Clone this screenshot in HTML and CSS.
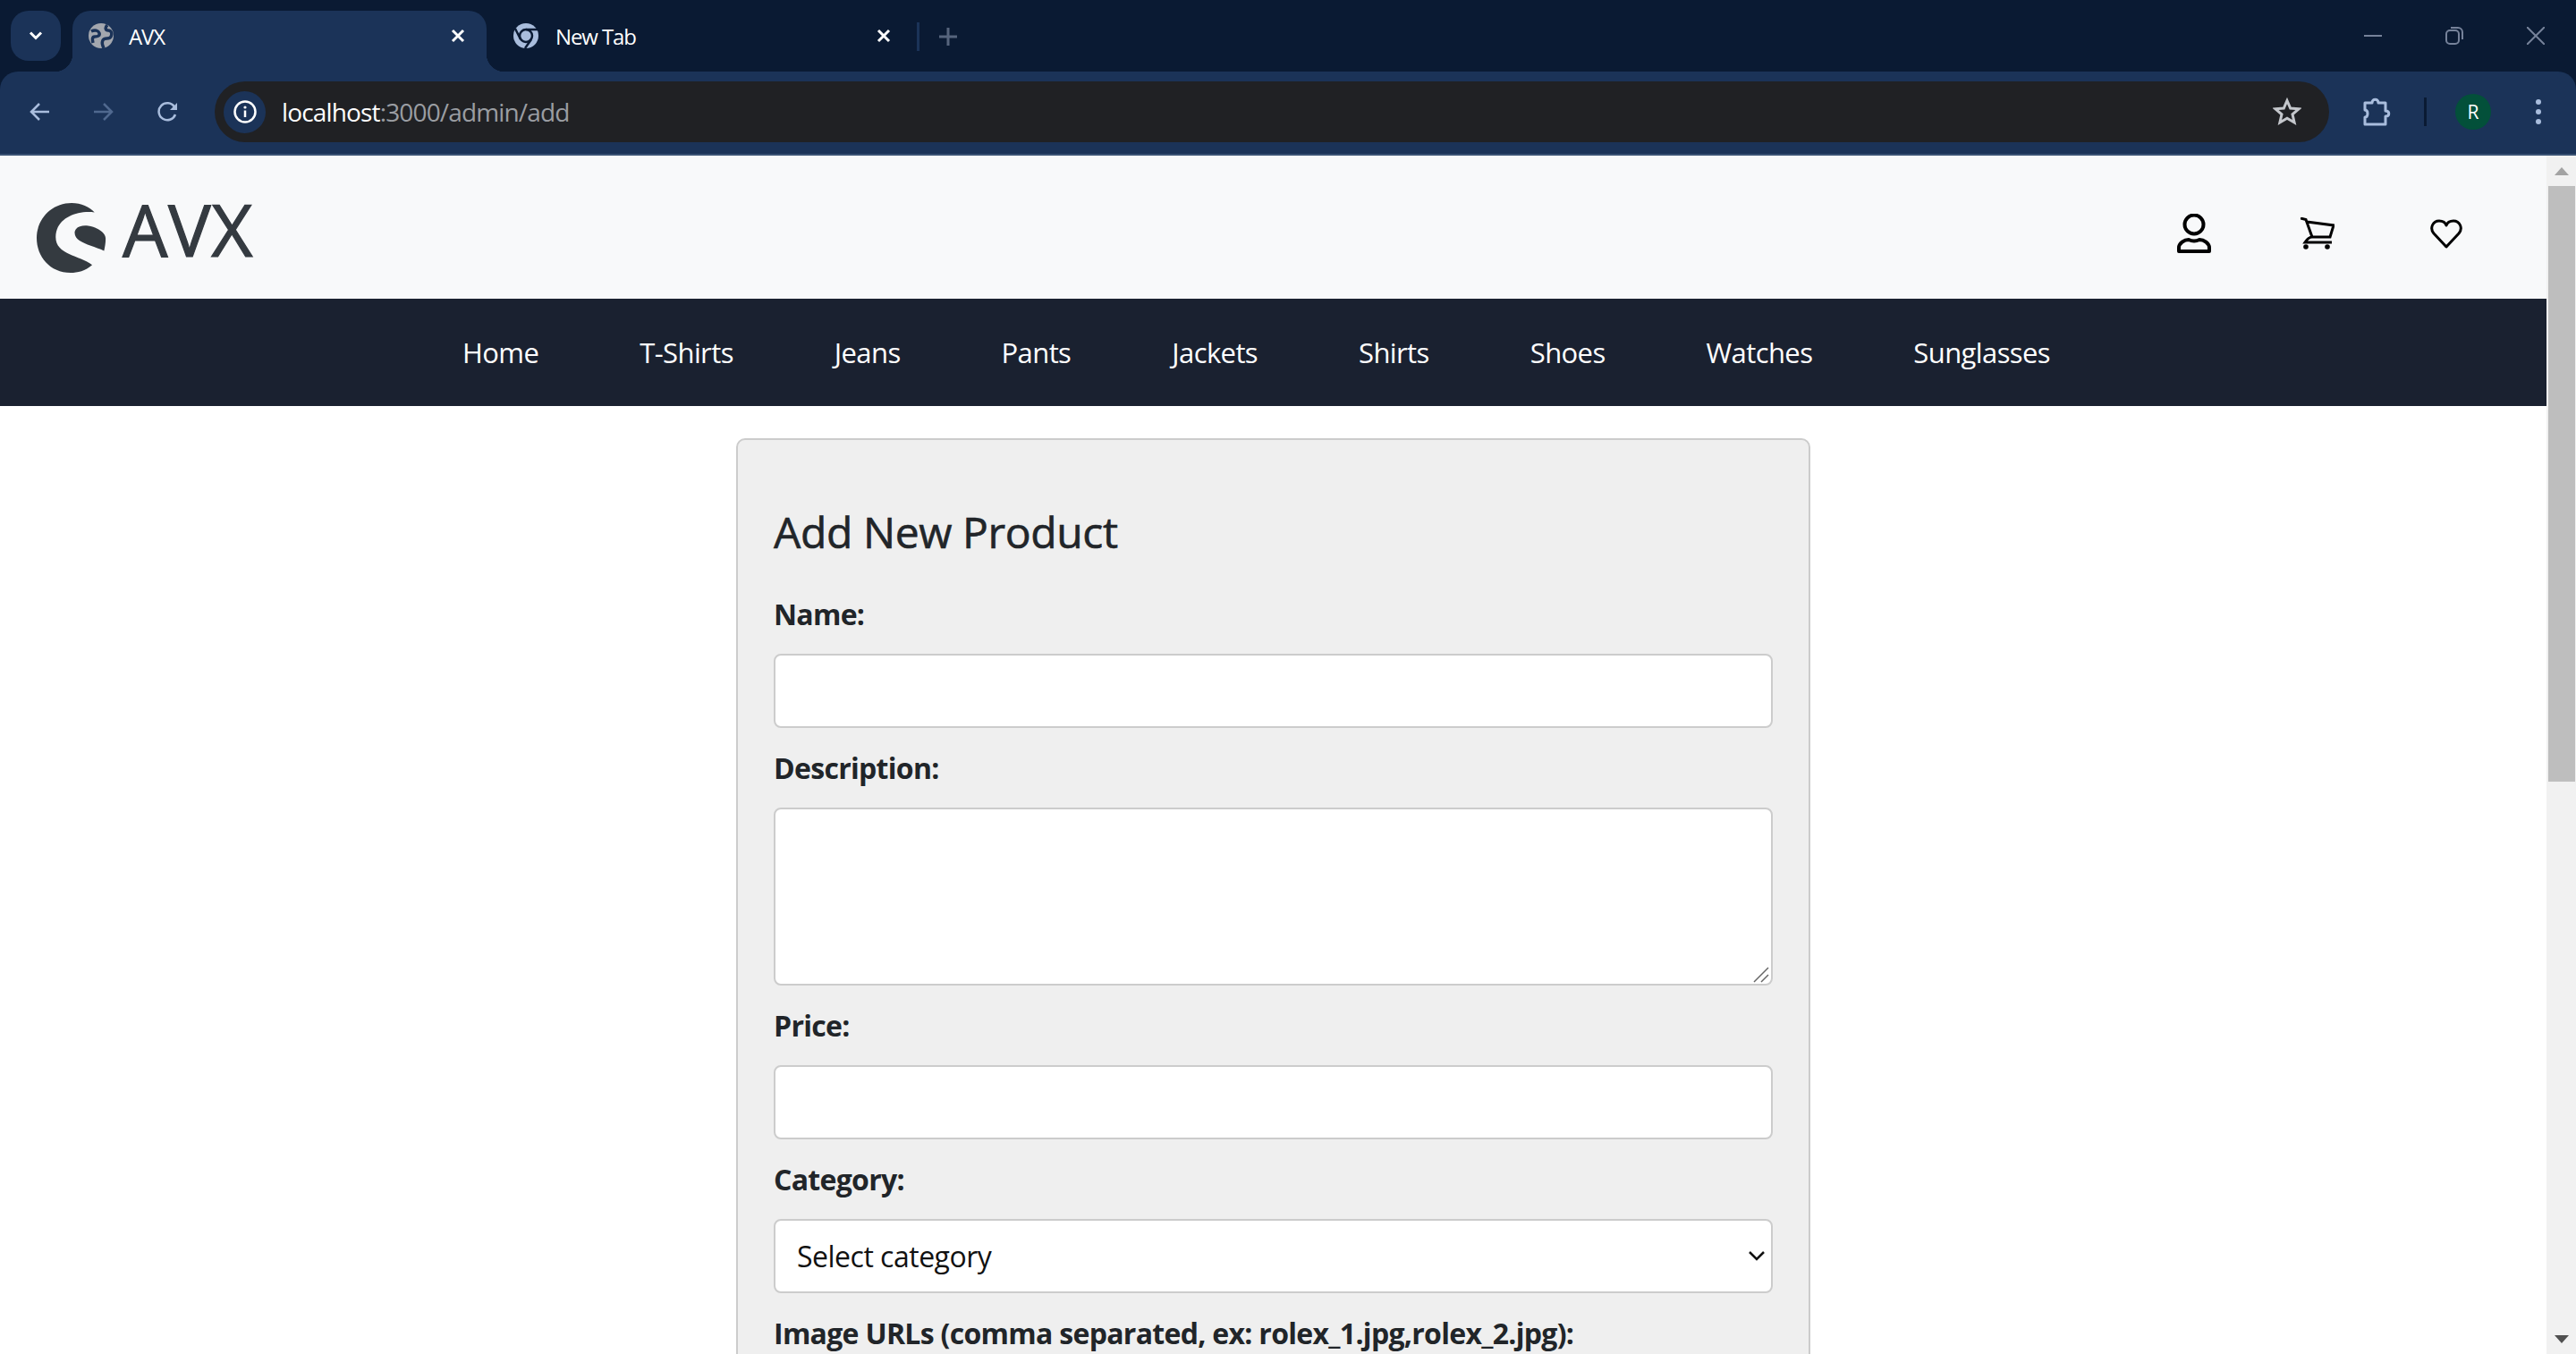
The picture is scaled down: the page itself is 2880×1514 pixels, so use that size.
FILE: index.html
```html
<!doctype html>
<html lang="en">
<head>
    <title>AVX</title>
    <link rel="stylesheet" href="styles.css">
</head>
<body>
    <div class="tabstrip">
        <div class="tab-search">
            <svg width="16" height="12" viewBox="0 0 16 12"><path d="M2 2.500l6 6 6-6" fill="none" stroke="#fff" stroke-width="3"/></svg>
        </div>
        <div class="tab tab-active">
            <svg class="favicon" width="28" height="28" viewBox="0 0 28 28">
                <circle cx="14" cy="14" r="14" fill="#a3a7ae"/>
                <path d="M3 9c4-2 8-1 9 2s-2 4-5 4-3 3-2 7M21 2c-3 3-2 6 1 6s5 3 3 7-7 0-9 4 0 6 1 9" fill="none" stroke="#1b3358" stroke-width="3.500"/>
            </svg>
            <span class="tab-title">AVX</span>
            <svg class="tab-close" width="16" height="16" viewBox="0 0 16 16"><path d="M2 2l12 12M14 2L2 14" stroke="#fff" stroke-width="3"/></svg>
        </div>
        <div class="tab">
            <svg class="favicon" width="28" height="28" viewBox="0 0 28 28">
                <circle cx="14" cy="14" r="14" fill="#a9bddd"/>
                <circle cx="14" cy="14" r="7" fill="none" stroke="#0a1a33" stroke-width="2.500"/>
                <path d="M14 7h13M8 18L2 6M20 18l-7 10" stroke="#0a1a33" stroke-width="2.500"/>
            </svg>
            <span class="tab-title">New Tab</span>
            <svg class="tab-close" width="16" height="16" viewBox="0 0 16 16"><path d="M2 2l12 12M14 2L2 14" stroke="#fff" stroke-width="3"/></svg>
        </div>
        <div class="tab-sep"></div>
        <svg class="tab-new" width="20" height="20" viewBox="0 0 20 20"><path d="M10 0v20M0 10h20" stroke="#56647d" stroke-width="3"/></svg>
        <div class="window-btns">
            <svg width="20" height="20" viewBox="0 0 20 20"><path d="M0 10h20" stroke="#76829a" stroke-width="2"/></svg>
            <svg width="20" height="20" viewBox="0 0 20 20"><rect x="1" y="4" width="14" height="15" rx="4" fill="none" stroke="#76829a" stroke-width="2"/><path d="M6 1h8a5 5 0 0 1 5 5v8" fill="none" stroke="#76829a" stroke-width="2"/></svg>
            <svg width="20" height="20" viewBox="0 0 20 20"><path d="M0 0l20 20M20 0L0 20" stroke="#76829a" stroke-width="2"/></svg>
        </div>
    </div>

    <div class="toolbar">
        <svg class="nav-btn" width="24" height="24" viewBox="0 0 24 24"><path d="M23 12H3M12 3l-9 9 9 9" fill="none" stroke="#a9bddd" stroke-width="2.500"/></svg>
        <svg class="nav-btn" width="24" height="24" viewBox="0 0 24 24"><path d="M1 12h20M12 3l9 9-9 9" fill="none" stroke="#50698f" stroke-width="2.500"/></svg>
        <svg class="nav-btn" width="24" height="24" viewBox="0 0 24 24"><path d="M20 15a9.500 9.500 0 1 1-1-8.500" fill="none" stroke="#a9bddd" stroke-width="2.500"/><path d="M22 2v8h-8z" fill="#a9bddd"/></svg>
        <div class="omnibox">
            <div class="site-info">
                <svg width="26" height="26" viewBox="0 0 26 26"><circle cx="13" cy="13" r="11.500" fill="none" stroke="#fff" stroke-width="2.500"/><path d="M13 11.500v7.500" stroke="#fff" stroke-width="2.500"/><circle cx="13" cy="8" r="1.600" fill="#fff"/></svg>
            </div>
            <span class="url"><span class="url-host">localhost</span>:3000/admin/add</span>
            <svg class="star" width="32" height="32" viewBox="0 0 32 32"><path d="M16 3.500l3.700 8.500 9.300.8-7 6.100 2.100 9.100-8.100-4.800-8.100 4.800 2.100-9.100-7-6.100 9.300-.8z" fill="none" stroke="#c4c7cc" stroke-width="3"/></svg>
        </div>
        <svg class="puzzle" width="32" height="32" viewBox="0 0 32 32"><path d="M2 6h8c0-5 7-5 7 0h8v9c5 0 5 6 0 6v9H2v-8c4 0 4-8 0-8z" fill="none" stroke="#a9bddd" stroke-width="3" stroke-linejoin="round"/></svg>
        <div class="toolbar-sep"></div>
        <div class="avatar">R</div>
        <svg class="dots" width="8" height="30" viewBox="0 0 8 30"><circle cx="4" cy="4" r="3" fill="#a9bddd"/><circle cx="4" cy="15" r="3" fill="#a9bddd"/><circle cx="4" cy="26" r="3" fill="#a9bddd"/></svg>
    </div>

    <div class="viewport">
        <div class="page">
            <header class="site-header">
                <div class="logo">
                    <svg width="78" height="78" viewBox="92 172 176 232" preserveAspectRatio="none">
                        <path d="M238 203C190 195 140 225 140 285C140 345 200 345 232 378C215 398 195 404 178 404C125 404 92 350 92 288C92 225 130 172 180 172C205 172 225 185 238 203Z" fill="#343a40"/>
                        <path d="M188 268C190 252 205 245 222 248C245 253 266 270 266 290C266 305 264 318 262 331C240 318 215 310 200 297C192 290 187 280 188 268Z" fill="#343a40"/>
                    </svg>
                    <span class="logo-text">AVX</span>
                </div>
                <div class="header-icons">
                    <svg width="38" height="44" viewBox="0 0 38 44"><circle cx="19" cy="12" r="10.500" fill="none" stroke="#000" stroke-width="4"/><path d="M2 42v-4c0-5 6-9 11-9q6 3 12 0c5 0 11 4 11 9v4z" fill="none" stroke="#000" stroke-width="4" stroke-linejoin="round"/></svg>
                    <svg width="38" height="36" viewBox="0 0 38 36"><path d="M0 1l6 1.500 7 19.500c-3 0-6 3-8 6h30M7 5l30 4-4 13H13" fill="none" stroke="#000" stroke-width="3"/><circle cx="6" cy="33" r="2.800"/><circle cx="30" cy="33" r="2.800"/></svg>
                    <svg width="36" height="33" viewBox="0 0 36 33"><path d="M18 31L4 16C-1 10 3 2 10 2c4 0 7 2 8 5 1-3 4-5 8-5 7 0 11 8 6 14z" fill="none" stroke="#000" stroke-width="3" stroke-linejoin="round"/></svg>
                </div>
            </header>

            <nav class="main-nav">
                <a href="#">Home</a>
                <a href="#">T-Shirts</a>
                <a href="#">Jeans</a>
                <a href="#">Pants</a>
                <a href="#">Jackets</a>
                <a href="#">Shirts</a>
                <a href="#">Shoes</a>
                <a href="#">Watches</a>
                <a href="#">Sunglasses</a>
            </nav>

            <form class="product-form">
                <h2>Add New Product</h2>
                <label for="name">Name:</label>
                <input id="name" type="text">
                <label for="description">Description:</label>
                <div class="field-wrap">
                    <textarea id="description"></textarea>
                    <svg class="grip" width="18" height="18" viewBox="0 0 18 18"><path d="M1 17L17 1M9 17l8-8" stroke="#666" stroke-width="1.500"/></svg>
                </div>
                <label for="price">Price:</label>
                <input id="price" type="text">
                <label for="category">Category:</label>
                <div class="field-wrap">
                    <select id="category">
                        <option>Select category</option>
                    </select>
                    <svg class="chevron" width="18" height="12" viewBox="0 0 18 12"><path d="M1 2l8 8 8-8" fill="none" stroke="#111" stroke-width="2.500"/></svg>
                </div>
                <label for="images">Image URLs (comma separated, ex: rolex_1.jpg,rolex_2.jpg):</label>
                <input id="images" type="text">
            </form>
        </div>
        <div class="scrollbar">
            <div class="scroll-btn"><div class="arrow-up"></div></div>
            <div class="scroll-thumb"></div>
            <div class="scroll-btn scroll-btn-down"><div class="arrow-down"></div></div>
        </div>
    </div>
</body>
</html>
```

FILE: styles.css
```css
* {
    box-sizing: border-box;
}
html, body {
    margin: 0;
    height: 1514px;
    overflow: hidden;
}
body {
    display: flex;
    flex-direction: column;
    font-family: "Open Sans", "Noto Sans", sans-serif;
    color: #212529;
    background: #0a1a33;
}

/* browser tabs */
.tabstrip {
    height: 80px;
    flex: none;
    display: flex;
    align-items: flex-start;
    padding: 12px 0 0 12px;
    color: #fff;
}
.tab-search {
    width: 56px;
    height: 56px;
    margin-right: 13px;
    border-radius: 20px;
    background: #1b3358;
    display: flex;
    align-items: center;
    justify-content: center;
}
.tab {
    position: relative;
    width: 463px;
    height: 68px;
    display: flex;
    align-items: center;
    padding: 0 24px 12px 18px;
    border-radius: 20px 20px 0 0;
}
.tab-active {
    background: #1b3358;
}
.tab-active::before,
.tab-active::after {
    content: "";
    position: absolute;
    bottom: 0;
    width: 20px;
    height: 20px;
}
.tab-active::before {
    left: -20px;
    background: radial-gradient(circle at 0 0, transparent 20px, #1b3358 20.5px);
}
.tab-active::after {
    right: -20px;
    background: radial-gradient(circle at 100% 0, transparent 20px, #1b3358 20.5px);
}
.tab + .tab {
    width: 469px;
    padding-left: 30px;
    padding-right: 17px;
}
.favicon {
    flex: none;
    margin-right: 17px;
}
.tab + .tab .favicon {
    margin-right: 19px;
}
.tab-title {
    flex: 1;
    font-size: 24px;
    letter-spacing: -1.1px;
}
.tab-sep {
    width: 3px;
    height: 32px;
    margin: 13px 0 0 12px;
    background: #1b3358;
}
.tab-new {
    margin: 19px 0 0 22px;
}
.window-btns {
    margin-left: auto;
    padding: 18px 35px 0 0;
    display: flex;
    gap: 71px;
}

/* toolbar */
.toolbar {
    height: 94px;
    flex: none;
    display: flex;
    align-items: center;
    padding: 0 0 2px 32px;
    background: #1b3358;
    border-bottom: 2px solid #3a5274;
    border-radius: 20px 20px 0 0;
}
.nav-btn {
    flex: none;
    margin-right: 48px;
}
.omnibox {
    margin-left: -8px;
    width: 2364px;
    height: 68px;
    border-radius: 34px;
    background: #202124;
    display: flex;
    align-items: center;
    padding-left: 10px;
}
.site-info {
    width: 47px;
    height: 47px;
    border-radius: 50%;
    background: #1b3358;
    display: flex;
    align-items: center;
    justify-content: center;
}
.url {
    margin-left: 18px;
    flex: 1;
    font-size: 28px;
    letter-spacing: -0.85px;
    color: #9a9da2;
}
.url-host {
    color: #fff;
}
.star {
    margin-right: 31px;
}
.puzzle {
    margin-left: 38px;
}
.toolbar-sep {
    width: 3px;
    height: 32px;
    margin-left: 36px;
    background: #0a1a33;
}
.avatar {
    width: 40px;
    height: 40px;
    margin-left: 32px;
    border-radius: 50%;
    background: #03503a;
    color: #fff;
    font-size: 21px;
    display: flex;
    align-items: center;
    justify-content: center;
}
.dots {
    margin-left: 49px;
}

/* page area */
.viewport {
    flex: 1;
    display: flex;
    min-height: 0;
}
.page {
    flex: 1;
    min-width: 0;
    overflow: hidden;
    background: #fff;
}
.scrollbar {
    width: 33px;
    flex: none;
    display: flex;
    flex-direction: column;
    background: #f1f1f1;
}
.scroll-btn {
    height: 34px;
    flex: none;
    display: flex;
    align-items: center;
    justify-content: center;
}
.scroll-btn-down {
    margin-top: auto;
}
.arrow-up {
    width: 0;
    border-left: 8px solid transparent;
    border-right: 8px solid transparent;
    border-bottom: 9px solid #a3a3a3;
}
.arrow-down {
    width: 0;
    border-left: 8px solid transparent;
    border-right: 8px solid transparent;
    border-top: 9px solid #505050;
}
.scroll-thumb {
    height: 666px;
    margin: 0 1px 0 2px;
    background: #bebebe;
    flex: none;
}

/* site header */
.site-header {
    height: 160px;
    display: flex;
    align-items: center;
    justify-content: space-between;
    padding: 0 94px 0 41px;
    background: #f8f9fa;
}
.logo {
    display: flex;
    align-items: flex-start;
    gap: 18px;
    margin-top: 24px;
}
.logo-text {
    margin-top: -10px;
    font-size: 80px;
    line-height: 78px;
    letter-spacing: 0.5px;
    color: #343a40;
    -webkit-text-stroke: 1.2px #343a40;
}
.header-icons {
    display: flex;
    align-items: center;
    gap: 100px;
    margin-top: 14px;
}
.header-icons svg:nth-child(2) {
    margin-right: 7px;
}

.main-nav {
    height: 120px;
    display: flex;
    align-items: center;
    justify-content: center;
    gap: 113px;
    padding-right: 38px;
    background: #1a2130;
}
.main-nav a {
    color: #fff;
    font-size: 31px;
    letter-spacing: -0.6px;
    text-decoration: none;
}

/* form */
.product-form {
    width: 1201px;
    margin: 36px auto 0;
    padding: 73px 40px 40px;
    border: 2px solid #ccc;
    border-radius: 10px;
    background: #efefef;
}
.product-form h2 {
    margin: 0 0 37px;
    font-size: 48px;
    line-height: 60px;
    font-weight: 400;
    letter-spacing: -0.4px;
    -webkit-text-stroke: 0.6px #212529;
}
.product-form label {
    display: block;
    height: 48px;
    margin-bottom: 21px;
    padding-top: 1px;
    font-size: 32px;
    line-height: 48px;
    font-weight: 700;
    letter-spacing: -0.7px;
}
.product-form input,
.product-form textarea,
.product-form select {
    display: block;
    width: 100%;
    margin-bottom: 20px;
    border: 2px solid #ccc;
    border-radius: 8px;
    background: #fff;
    font-family: inherit;
    outline: none;
}
.product-form input {
    height: 83px;
}
.product-form textarea {
    height: 199px;
    resize: none;
}
.field-wrap {
    position: relative;
}
.product-form select {
    height: 83px;
    padding: 0 24px;
    font-size: 32px;
    color: #111;
    letter-spacing: -0.5px;
    appearance: none;
}
.chevron {
    position: absolute;
    top: 35px;
    right: 9px;
}
.grip {
    position: absolute;
    right: 4px;
    bottom: 3px;
}
```
